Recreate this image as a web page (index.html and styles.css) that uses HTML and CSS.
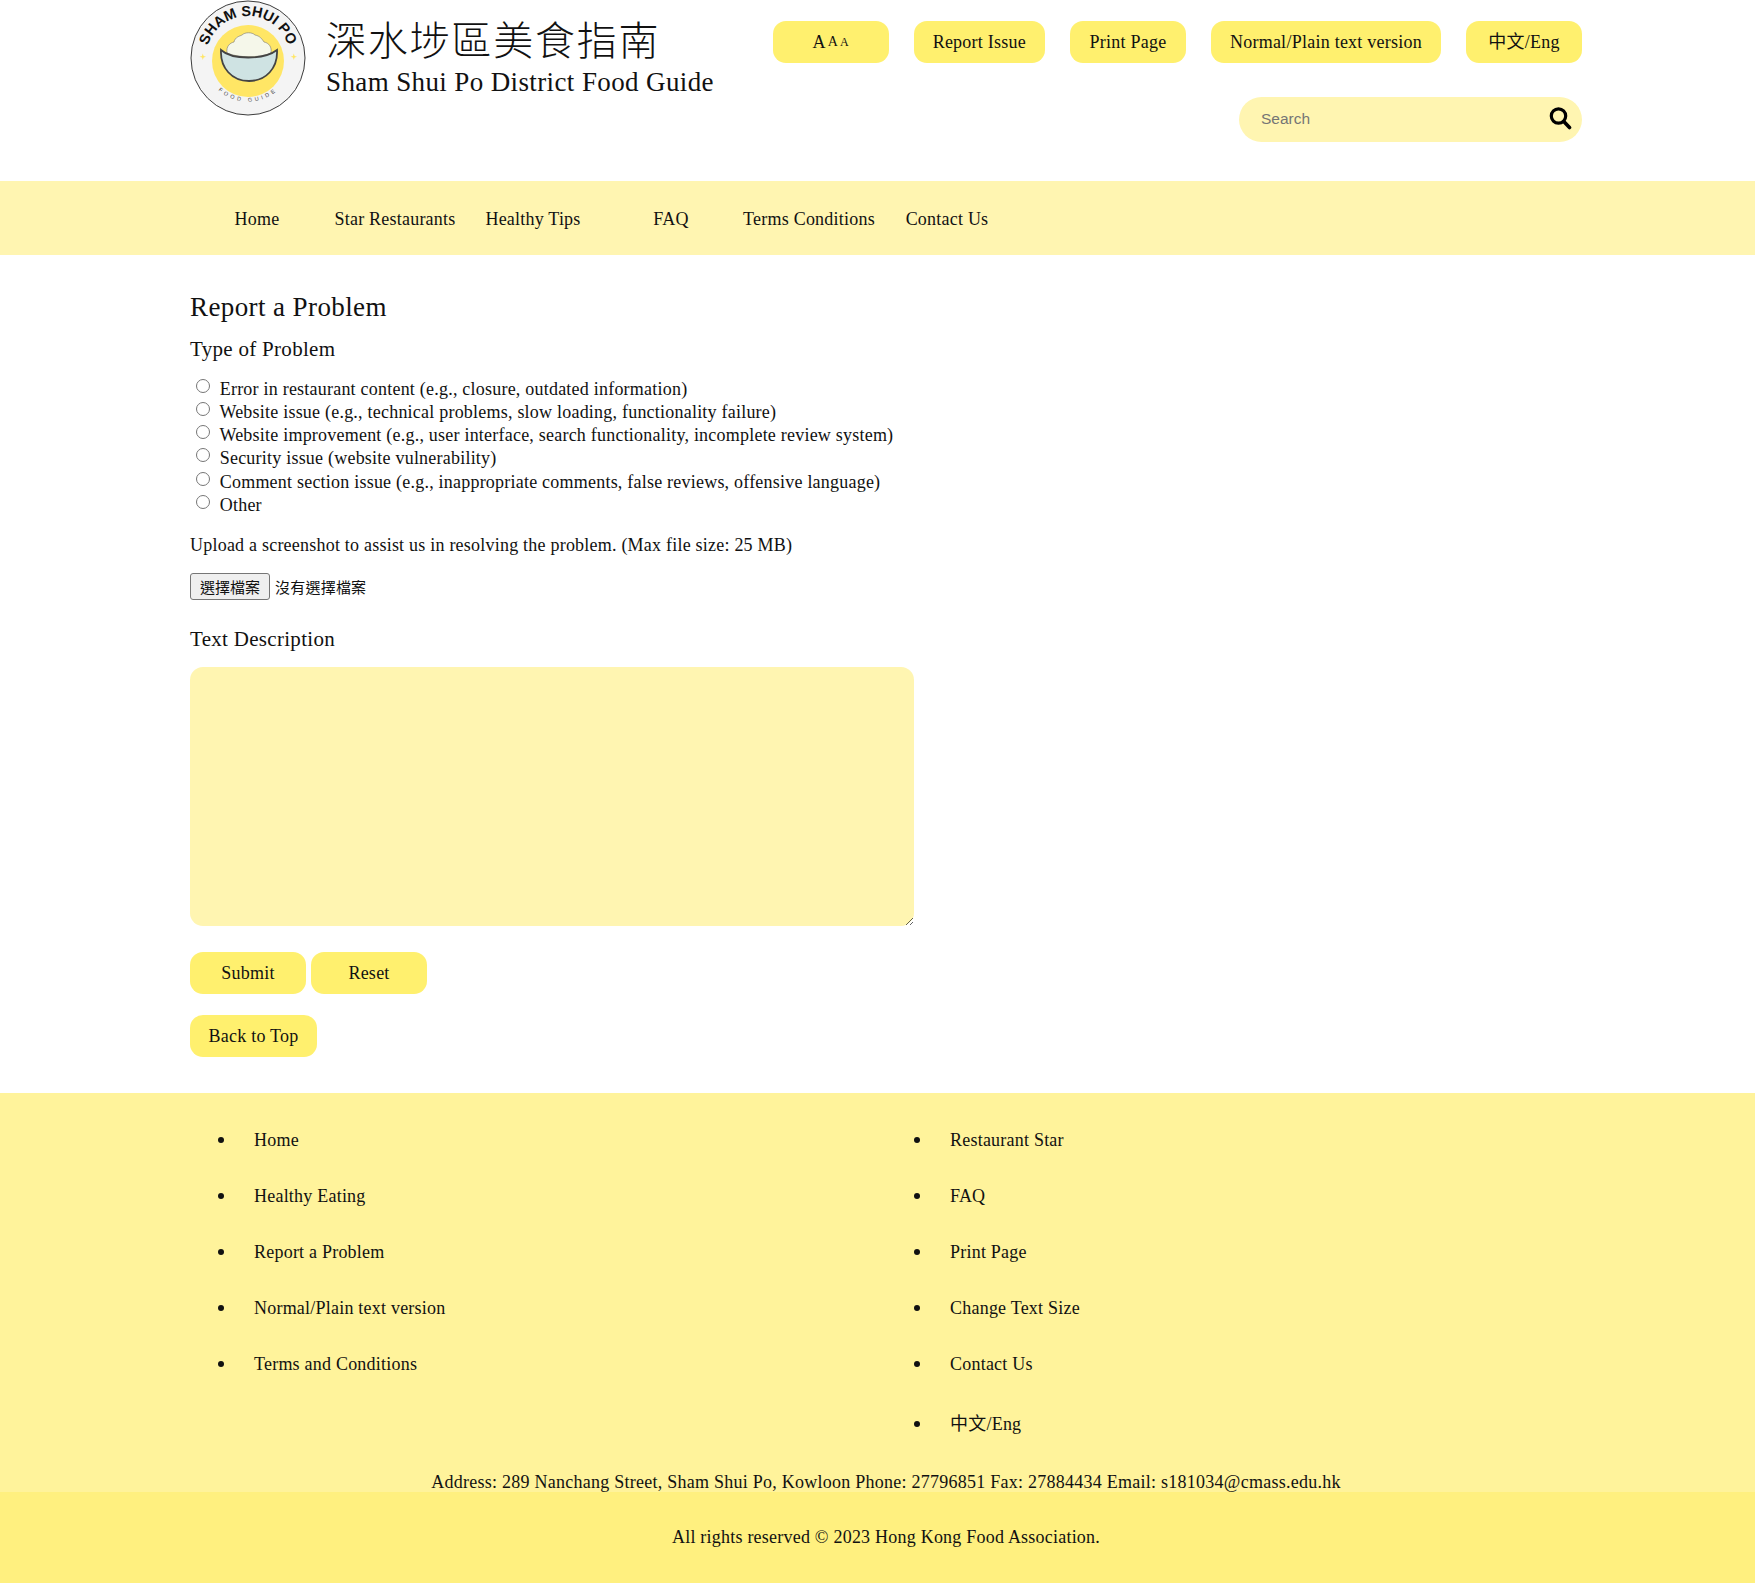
FILE: index.html
```html
<!DOCTYPE html>
<html lang="en">

<head>
  <meta charset="UTF-8" />
  <meta name="viewport" content="width=device-width, initial-scale=1.0" />
  <title>Sham Shui Po District Food Guide - Report a Problem</title>
  <link rel="stylesheet" href="styles.css">
</head>

<body>
  <header class="site-header">
    <div class="brand">
      <svg class="logo" viewBox="0 0 116 116" width="116" height="116" role="img" aria-label="Sham Shui Po Food Guide logo">
        <defs>
          <path id="arcTop" d="M16 58 A42 42 0 0 1 100 58" />
          <path id="arcBottom" d="M18 76 A44 44 0 0 0 98 76" />
        </defs>
        <circle cx="58" cy="58" r="57" fill="#f4f4f4" stroke="#3c3c3c" stroke-width="1" />
        <circle cx="58" cy="61" r="36" fill="#ffe665" />
        <path d="M37 53 C36 46 40 43 44 42 C45 37 50 36 52 35 C55 32 62 32 65 35 C70 36 72 39 74 42 C79 43 82 47 81 53 C70 58 48 58 37 53 Z" fill="#f5f7ea" stroke="#777" stroke-width="0.6" />
        <path d="M31 50 C42 60 74 60 87 50 C88 68 76 81 59 81 C42 81 30 68 31 50 Z" fill="#cfe3e3" stroke="#444" stroke-width="1.8" />
        <path d="M12 56 l0.8 -2.4 l0.8 2.4 l2.4 0.8 l-2.4 0.8 l-0.8 2.4 l-0.8 -2.4 l-2.4 -0.8 Z" fill="#ffe665" />
        <path d="M103 56 l0.8 -2.4 l0.8 2.4 l2.4 0.8 l-2.4 0.8 l-0.8 2.4 l-0.8 -2.4 l-2.4 -0.8 Z" fill="#ffe665" />
        <text class="logo-top"><textPath href="#arcTop" startOffset="50%" text-anchor="middle">SHAM SHUI PO</textPath></text>
        <text class="logo-bottom"><textPath href="#arcBottom" startOffset="50%" text-anchor="middle">FOOD GUIDE</textPath></text>
      </svg>
      <div class="brand-text">
        <div class="brand-zh">深水埗區美食指南</div>
        <div class="brand-en">Sham Shui Po District Food Guide</div>
      </div>
    </div>

    <div class="tools">
      <div class="tool-buttons">
        <a class="pill tool-size" href="#">A<small>A</small><small class="tiny">A</small></a>
        <a class="pill" href="#">Report Issue</a>
        <a class="pill" href="#">Print Page</a>
        <a class="pill" href="#">Normal/Plain text version</a>
        <a class="pill" href="#">中文/Eng</a>
      </div>
      <form class="search">
        <input type="text" placeholder="Search" />
        <svg viewBox="0 0 24 24" width="24" height="24" aria-hidden="true">
          <circle cx="10.5" cy="10" r="7.2" fill="none" stroke="#000" stroke-width="3.2" />
          <path d="M15.8 15.5 L21.5 21.5" stroke="#000" stroke-width="3.6" stroke-linecap="round" />
        </svg>
      </form>
    </div>
  </header>

  <nav class="main-nav">
    <ul>
      <li><a href="#">Home</a></li>
      <li><a href="#">Star Restaurants</a></li>
      <li><a href="#">Healthy Tips</a></li>
      <li><a href="#">FAQ</a></li>
      <li><a href="#">Terms Conditions</a></li>
      <li><a href="#">Contact Us</a></li>
    </ul>
  </nav>

  <main class="content">
    <h2>Report a Problem</h2>
    <form>
      <h3>Type of Problem</h3>
      <div class="radios">
        <label><input type="radio" name="problem" /> Error in restaurant content (e.g., closure, outdated information)</label>
        <label><input type="radio" name="problem" /> Website issue (e.g., technical problems, slow loading, functionality failure)</label>
        <label><input type="radio" name="problem" /> Website improvement (e.g., user interface, search functionality, incomplete review system)</label>
        <label><input type="radio" name="problem" /> Security issue (website vulnerability)</label>
        <label><input type="radio" name="problem" /> Comment section issue (e.g., inappropriate comments, false reviews, offensive language)</label>
        <label><input type="radio" name="problem" /> Other</label>
      </div>

      <p class="upload-note">Upload a screenshot to assist us in resolving the problem. (Max file size: 25 MB)</p>
      <div class="file-row">
        <button type="button" class="file-btn">選擇檔案</button>
        <span>沒有選擇檔案</span>
      </div>

      <h3 class="desc-title">Text Description</h3>
      <textarea></textarea>

      <div class="form-actions">
        <button type="submit" class="pill form-btn">Submit</button>
        <button type="reset" class="pill form-btn">Reset</button>
      </div>
    </form>
    <a class="pill back-top" href="#">Back to Top</a>
  </main>

  <footer>
    <div class="footer-links">
      <ul>
        <li><a href="#">Home</a></li>
        <li><a href="#">Healthy Eating</a></li>
        <li><a href="#">Report a Problem</a></li>
        <li><a href="#">Normal/Plain text version</a></li>
        <li><a href="#">Terms and Conditions</a></li>
      </ul>
      <ul>
        <li><a href="#">Restaurant Star</a></li>
        <li><a href="#">FAQ</a></li>
        <li><a href="#">Print Page</a></li>
        <li><a href="#">Change Text Size</a></li>
        <li><a href="#">Contact Us</a></li>
        <li class="lang"><a href="#">中文/Eng</a></li>
      </ul>
    </div>
    <p class="address">Address: 289 Nanchang Street, Sham Shui Po, Kowloon Phone: 27796851 Fax: 27884434 Email: s181034@cmass.edu.hk</p>
    <p class="copyright">All rights reserved &copy; 2023 Hong Kong Food Association.</p>
  </footer>
</body>

</html>
```

FILE: styles.css
```css
body {
  margin: 0;
  font-family: 'Liberation Serif', 'Noto Sans CJK TC', serif;
  font-size: 18px;
  letter-spacing: 0.22px;
  color: #111;
  background: #fff;
}

a {
  color: inherit;
  text-decoration: none;
}

.site-header {
  display: flex;
  justify-content: space-between;
  height: 181px;
  padding: 0 173px 0 190px;
}

.brand {
  display: flex;
  align-items: flex-start;
  gap: 20px;
}

.logo {
  display: block;
}

.logo-top {
  font-family: 'Liberation Sans', sans-serif;
  font-size: 14.5px;
  font-weight: bold;
  letter-spacing: 0;
  fill: #111;
}

.logo-bottom {
  font-family: 'Liberation Sans', sans-serif;
  font-size: 5.5px;
  letter-spacing: 3px;
  fill: #444;
}

.brand-text {
  padding-top: 11px;
}

.brand-zh {
  font-family: 'Noto Sans CJK TC', sans-serif;
  font-size: 40px;
  font-weight: 300;
  line-height: 54px;
  letter-spacing: 1.8px;
}

.brand-en {
  font-size: 27px;
  line-height: 34px;
  letter-spacing: 0.38px;
}

.tools {
  display: flex;
  flex-direction: column;
  align-items: flex-end;
  padding-top: 21px;
}

.tool-buttons {
  display: flex;
  gap: 25.4px;
}

.pill {
  display: inline-flex;
  align-items: center;
  justify-content: center;
  height: 42px;
  min-width: 116px;
  padding: 0 18.5px;
  box-sizing: border-box;
  background-color: #fff06e;
  border: none;
  border-radius: 13px;
  color: #111;
  font-family: inherit;
  font-size: 18px;
  letter-spacing: 0.25px;
  line-height: 20px;
}

.tool-size small {
  font-size: 14px;
  margin-left: 2px;
}

.tool-size small.tiny {
  font-size: 12px;
}

.search {
  display: flex;
  align-items: center;
  width: 343px;
  height: 45px;
  margin-top: 34px;
  padding: 0 10px 0 22px;
  box-sizing: border-box;
  background-color: #fff5b1;
  border-radius: 23px;
}

.search input {
  flex: 1;
  min-width: 0;
  margin-bottom: 1px;
  padding-left: 0;
  border: none;
  outline: none;
  background: transparent;
  font-family: 'Liberation Sans', sans-serif;
  font-size: 15.5px;
}

.search input::placeholder {
  color: #757575;
}

.search svg {
  margin-bottom: 3px;
}

.main-nav {
  height: 74px;
  background-color: #fff5b1;
}

.main-nav ul {
  list-style: none;
  margin: 0;
  padding: 2px 0 0 188px;
  box-sizing: border-box;
  display: flex;
  height: 100%;
  align-items: center;
}

.main-nav li {
  width: 138px;
  text-align: center;
}

.content {
  padding: 36px 173px 0 190px;
}

.content h2 {
  margin: 0;
  font-size: 27px;
  font-weight: normal;
  line-height: 32px;
  letter-spacing: 0.4px;
}

.content h3 {
  margin: 0;
  font-size: 21px;
  font-weight: normal;
  line-height: 24px;
  letter-spacing: 0.3px;
}

.content form > h3:first-child {
  margin-top: 14px;
}

.radios {
  margin-top: 17px;
  padding-left: 6px;
}

.radios label {
  display: block;
  line-height: 23.15px;
}

.radios input {
  margin: 0 5px 0 0;
  width: 14px;
  height: 14px;
  vertical-align: 2px;
}

.upload-note {
  margin: 17px 0 0;
  line-height: 23px;
}

.file-row {
  display: flex;
  align-items: center;
  gap: 5px;
  margin-top: 16px;
  font-size: 15px;
}

.file-btn {
  width: 80px;
  height: 27px;
  padding: 0;
  border: 1px solid #767676;
  border-radius: 3px;
  background-color: #efefef;
  color: #111;
  font-family: inherit;
  font-size: 15px;
}

.desc-title {
  margin-top: 27px !important;
}

.content textarea {
  display: block;
  width: 724px;
  height: 259px;
  margin-top: 16px;
  padding: 0;
  box-sizing: border-box;
  border: none;
  outline: none;
  border-radius: 13px;
  background-color: #fff5b1;
}

.form-actions {
  display: flex;
  gap: 5px;
  margin-top: 26px;
}

.form-btn {
  width: 116px;
  padding: 0;
}

.back-top {
  margin-top: 21px;
  width: 127px;
  padding: 0;
}

footer {
  margin-top: 36px;
  background-color: #fff39b;
}

.footer-links {
  display: grid;
  grid-template-columns: 696px 696px;
  margin-left: 190px;
  padding-top: 18px;
}

.footer-links ul {
  margin: 0;
  padding-left: 47px;
}

.footer-links li {
  height: 56px;
  line-height: 56px;
}

.footer-links li::marker {
  font-size: 20px;
}

.footer-links li.lang {
  height: 60px;
  padding-top: 4px;
}

.footer-links li a {
  padding-left: 17px;
}

.address {
  margin: 0;
  padding: 17px 0 0 17px;
  text-align: center;
  line-height: 20px;
  letter-spacing: 0.25px;
}

.copyright {
  margin: 0;
  height: 91px;
  line-height: 91px;
  padding-left: 17px;
  text-align: center;
  background-color: #fff07f;
}
```
